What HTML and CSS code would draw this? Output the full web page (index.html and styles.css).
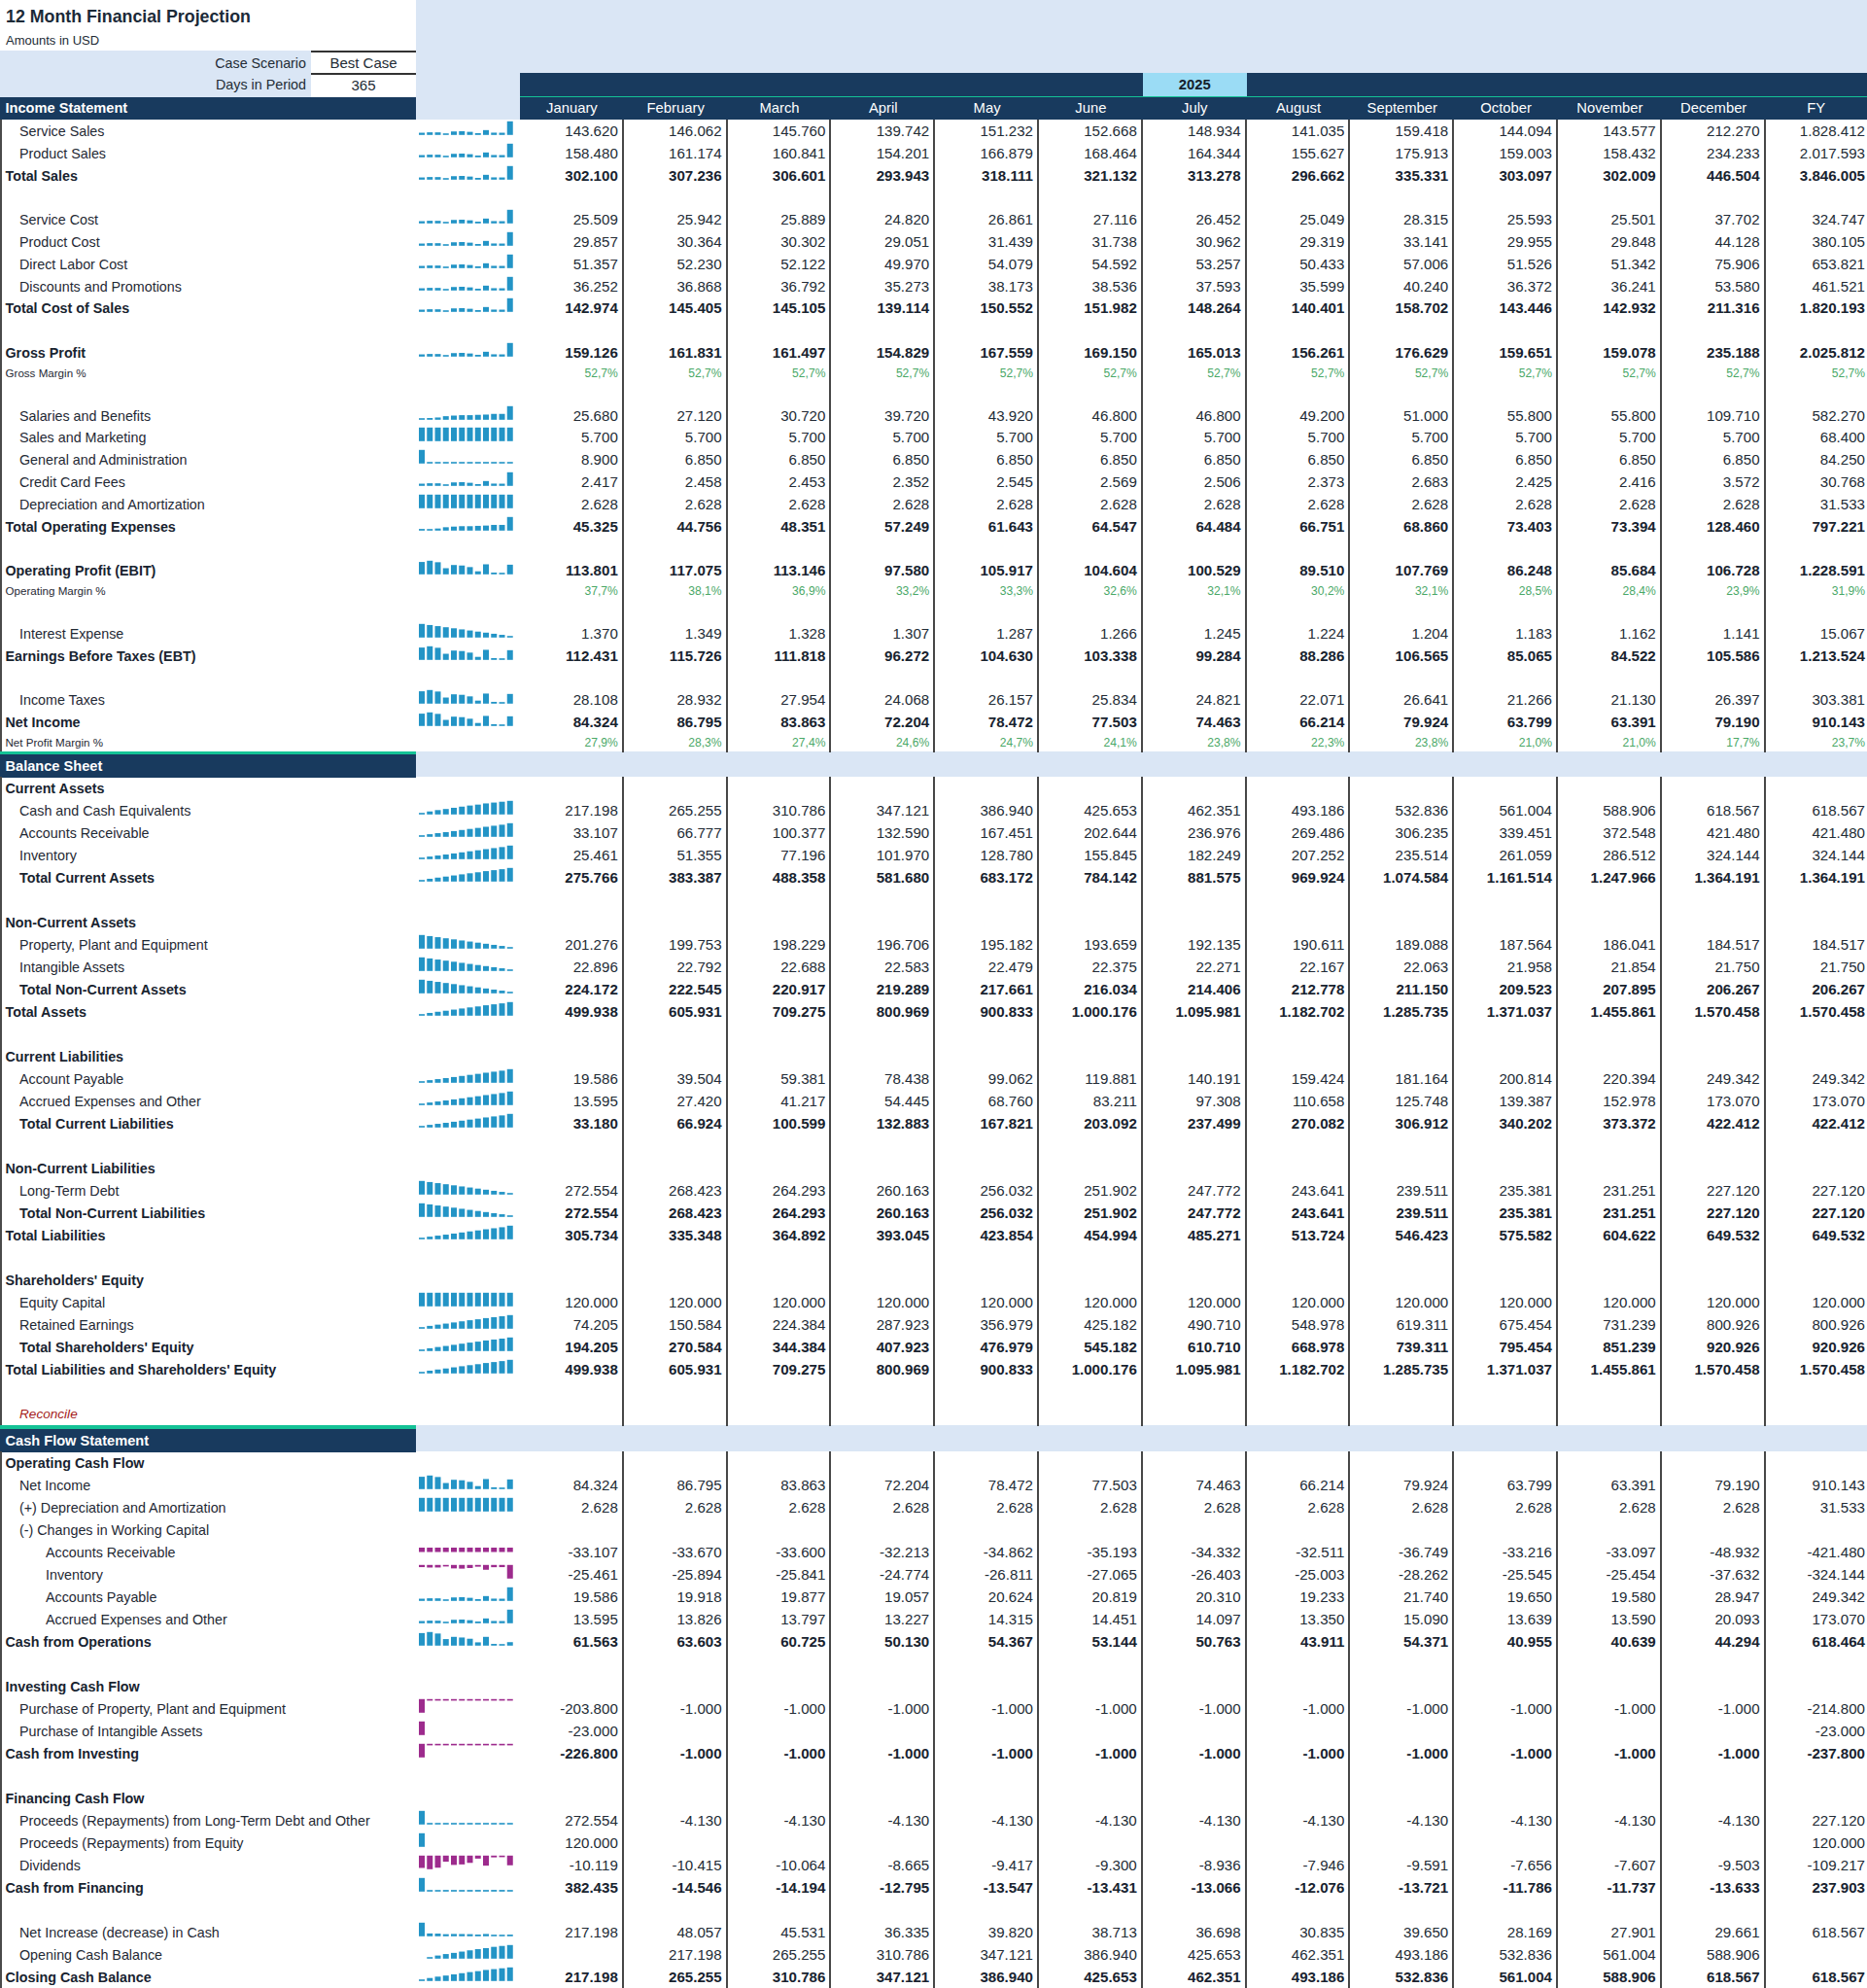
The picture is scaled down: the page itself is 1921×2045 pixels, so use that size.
FILE: index.html
```html
<!DOCTYPE html>
<html lang="en">
<head>
<meta charset="utf-8">
<title>12 Month Financial Projection</title>
<link rel="stylesheet" href="styles.css">
</head>
<body>
<div class="sheet">
  <header class="top">
    <div class="hd r1"><div class="ttl">12 Month Financial Projection</div></div>
    <div class="hd r2"><div class="sub">Amounts in USD</div></div>
    <div class="r3"><div class="pl">Case Scenario</div><div class="pv">Best Case</div></div>
    <div class="r4"><div class="pl">Days in Period</div><div class="pv">365</div><div></div><div class="nav"></div><div class="yr">2025</div><div class="nav"></div></div>
    <div class="r5"><div class="sec">Income Statement</div><div></div><span>January</span><span>February</span><span>March</span><span>April</span><span>May</span><span>June</span><span>July</span><span>August</span><span>September</span><span>October</span><span>November</span><span>December</span><span>FY</span></div>
  </header>

  <section class="part is">
  <div class="row"><div class="l i1">Service Sales</div><div class="s"></div><span>143.620</span><span>146.062</span><span>145.760</span><span>139.742</span><span>151.232</span><span>152.668</span><span>148.934</span><span>141.035</span><span>159.418</span><span>144.094</span><span>143.577</span><span>212.270</span><span>1.828.412</span></div>
  <div class="row"><div class="l i1">Product Sales</div><div class="s"></div><span>158.480</span><span>161.174</span><span>160.841</span><span>154.201</span><span>166.879</span><span>168.464</span><span>164.344</span><span>155.627</span><span>175.913</span><span>159.003</span><span>158.432</span><span>234.233</span><span>2.017.593</span></div>
  <div class="row b"><div class="l">Total Sales</div><div class="s"></div><span>302.100</span><span>307.236</span><span>306.601</span><span>293.943</span><span>318.111</span><span>321.132</span><span>313.278</span><span>296.662</span><span>335.331</span><span>303.097</span><span>302.009</span><span>446.504</span><span>3.846.005</span></div>
  <div class="row"><div class="l"></div><div></div><span></span><span></span><span></span><span></span><span></span><span></span><span></span><span></span><span></span><span></span><span></span><span></span><span></span></div>
  <div class="row"><div class="l i1">Service Cost</div><div class="s"></div><span>25.509</span><span>25.942</span><span>25.889</span><span>24.820</span><span>26.861</span><span>27.116</span><span>26.452</span><span>25.049</span><span>28.315</span><span>25.593</span><span>25.501</span><span>37.702</span><span>324.747</span></div>
  <div class="row"><div class="l i1">Product Cost</div><div class="s"></div><span>29.857</span><span>30.364</span><span>30.302</span><span>29.051</span><span>31.439</span><span>31.738</span><span>30.962</span><span>29.319</span><span>33.141</span><span>29.955</span><span>29.848</span><span>44.128</span><span>380.105</span></div>
  <div class="row"><div class="l i1">Direct Labor Cost</div><div class="s"></div><span>51.357</span><span>52.230</span><span>52.122</span><span>49.970</span><span>54.079</span><span>54.592</span><span>53.257</span><span>50.433</span><span>57.006</span><span>51.526</span><span>51.342</span><span>75.906</span><span>653.821</span></div>
  <div class="row"><div class="l i1">Discounts and Promotions</div><div class="s"></div><span>36.252</span><span>36.868</span><span>36.792</span><span>35.273</span><span>38.173</span><span>38.536</span><span>37.593</span><span>35.599</span><span>40.240</span><span>36.372</span><span>36.241</span><span>53.580</span><span>461.521</span></div>
  <div class="row b"><div class="l">Total Cost of Sales</div><div class="s"></div><span>142.974</span><span>145.405</span><span>145.105</span><span>139.114</span><span>150.552</span><span>151.982</span><span>148.264</span><span>140.401</span><span>158.702</span><span>143.446</span><span>142.932</span><span>211.316</span><span>1.820.193</span></div>
  <div class="row"><div class="l"></div><div></div><span></span><span></span><span></span><span></span><span></span><span></span><span></span><span></span><span></span><span></span><span></span><span></span><span></span></div>
  <div class="row b"><div class="l">Gross Profit</div><div class="s"></div><span>159.126</span><span>161.831</span><span>161.497</span><span>154.829</span><span>167.559</span><span>169.150</span><span>165.013</span><span>156.261</span><span>176.629</span><span>159.651</span><span>159.078</span><span>235.188</span><span>2.025.812</span></div>
  <div class="row m"><div class="l">Gross Margin %</div><div></div><span>52,7%</span><span>52,7%</span><span>52,7%</span><span>52,7%</span><span>52,7%</span><span>52,7%</span><span>52,7%</span><span>52,7%</span><span>52,7%</span><span>52,7%</span><span>52,7%</span><span>52,7%</span><span>52,7%</span></div>
  <div class="row"><div class="l"></div><div></div><span></span><span></span><span></span><span></span><span></span><span></span><span></span><span></span><span></span><span></span><span></span><span></span><span></span></div>
  <div class="row"><div class="l i1">Salaries and Benefits</div><div class="s"></div><span>25.680</span><span>27.120</span><span>30.720</span><span>39.720</span><span>43.920</span><span>46.800</span><span>46.800</span><span>49.200</span><span>51.000</span><span>55.800</span><span>55.800</span><span>109.710</span><span>582.270</span></div>
  <div class="row"><div class="l i1">Sales and Marketing</div><div class="s"></div><span>5.700</span><span>5.700</span><span>5.700</span><span>5.700</span><span>5.700</span><span>5.700</span><span>5.700</span><span>5.700</span><span>5.700</span><span>5.700</span><span>5.700</span><span>5.700</span><span>68.400</span></div>
  <div class="row"><div class="l i1">General and Administration</div><div class="s"></div><span>8.900</span><span>6.850</span><span>6.850</span><span>6.850</span><span>6.850</span><span>6.850</span><span>6.850</span><span>6.850</span><span>6.850</span><span>6.850</span><span>6.850</span><span>6.850</span><span>84.250</span></div>
  <div class="row"><div class="l i1">Credit Card Fees</div><div class="s"></div><span>2.417</span><span>2.458</span><span>2.453</span><span>2.352</span><span>2.545</span><span>2.569</span><span>2.506</span><span>2.373</span><span>2.683</span><span>2.425</span><span>2.416</span><span>3.572</span><span>30.768</span></div>
  <div class="row"><div class="l i1">Depreciation and Amortization</div><div class="s"></div><span>2.628</span><span>2.628</span><span>2.628</span><span>2.628</span><span>2.628</span><span>2.628</span><span>2.628</span><span>2.628</span><span>2.628</span><span>2.628</span><span>2.628</span><span>2.628</span><span>31.533</span></div>
  <div class="row b"><div class="l">Total Operating Expenses</div><div class="s"></div><span>45.325</span><span>44.756</span><span>48.351</span><span>57.249</span><span>61.643</span><span>64.547</span><span>64.484</span><span>66.751</span><span>68.860</span><span>73.403</span><span>73.394</span><span>128.460</span><span>797.221</span></div>
  <div class="row"><div class="l"></div><div></div><span></span><span></span><span></span><span></span><span></span><span></span><span></span><span></span><span></span><span></span><span></span><span></span><span></span></div>
  <div class="row b"><div class="l">Operating Profit (EBIT)</div><div class="s"></div><span>113.801</span><span>117.075</span><span>113.146</span><span>97.580</span><span>105.917</span><span>104.604</span><span>100.529</span><span>89.510</span><span>107.769</span><span>86.248</span><span>85.684</span><span>106.728</span><span>1.228.591</span></div>
  <div class="row m"><div class="l">Operating Margin %</div><div></div><span>37,7%</span><span>38,1%</span><span>36,9%</span><span>33,2%</span><span>33,3%</span><span>32,6%</span><span>32,1%</span><span>30,2%</span><span>32,1%</span><span>28,5%</span><span>28,4%</span><span>23,9%</span><span>31,9%</span></div>
  <div class="row"><div class="l"></div><div></div><span></span><span></span><span></span><span></span><span></span><span></span><span></span><span></span><span></span><span></span><span></span><span></span><span></span></div>
  <div class="row"><div class="l i1">Interest Expense</div><div class="s"></div><span>1.370</span><span>1.349</span><span>1.328</span><span>1.307</span><span>1.287</span><span>1.266</span><span>1.245</span><span>1.224</span><span>1.204</span><span>1.183</span><span>1.162</span><span>1.141</span><span>15.067</span></div>
  <div class="row b"><div class="l">Earnings Before Taxes (EBT)</div><div class="s"></div><span>112.431</span><span>115.726</span><span>111.818</span><span>96.272</span><span>104.630</span><span>103.338</span><span>99.284</span><span>88.286</span><span>106.565</span><span>85.065</span><span>84.522</span><span>105.586</span><span>1.213.524</span></div>
  <div class="row"><div class="l"></div><div></div><span></span><span></span><span></span><span></span><span></span><span></span><span></span><span></span><span></span><span></span><span></span><span></span><span></span></div>
  <div class="row"><div class="l i1">Income Taxes</div><div class="s"></div><span>28.108</span><span>28.932</span><span>27.954</span><span>24.068</span><span>26.157</span><span>25.834</span><span>24.821</span><span>22.071</span><span>26.641</span><span>21.266</span><span>21.130</span><span>26.397</span><span>303.381</span></div>
  <div class="row b"><div class="l">Net Income</div><div class="s"></div><span>84.324</span><span>86.795</span><span>83.863</span><span>72.204</span><span>78.472</span><span>77.503</span><span>74.463</span><span>66.214</span><span>79.924</span><span>63.799</span><span>63.391</span><span>79.190</span><span>910.143</span></div>
  <div class="row m"><div class="l">Net Profit Margin %</div><div></div><span>27,9%</span><span>28,3%</span><span>27,4%</span><span>24,6%</span><span>24,7%</span><span>24,1%</span><span>23,8%</span><span>22,3%</span><span>23,8%</span><span>21,0%</span><span>21,0%</span><span>17,7%</span><span>23,7%</span></div>
  </section>

  <section class="part">
  <div class="sep"><div></div></div>
  <div class="sh"><div class="sec">Balance Sheet</div></div>
  <div class="row b"><div class="l">Current Assets</div><div></div><span></span><span></span><span></span><span></span><span></span><span></span><span></span><span></span><span></span><span></span><span></span><span></span><span></span></div>
  <div class="row"><div class="l i1">Cash and Cash Equivalents</div><div class="s"></div><span>217.198</span><span>265.255</span><span>310.786</span><span>347.121</span><span>386.940</span><span>425.653</span><span>462.351</span><span>493.186</span><span>532.836</span><span>561.004</span><span>588.906</span><span>618.567</span><span>618.567</span></div>
  <div class="row"><div class="l i1">Accounts Receivable</div><div class="s"></div><span>33.107</span><span>66.777</span><span>100.377</span><span>132.590</span><span>167.451</span><span>202.644</span><span>236.976</span><span>269.486</span><span>306.235</span><span>339.451</span><span>372.548</span><span>421.480</span><span>421.480</span></div>
  <div class="row"><div class="l i1">Inventory</div><div class="s"></div><span>25.461</span><span>51.355</span><span>77.196</span><span>101.970</span><span>128.780</span><span>155.845</span><span>182.249</span><span>207.252</span><span>235.514</span><span>261.059</span><span>286.512</span><span>324.144</span><span>324.144</span></div>
  <div class="row b"><div class="l i1">Total Current Assets</div><div class="s"></div><span>275.766</span><span>383.387</span><span>488.358</span><span>581.680</span><span>683.172</span><span>784.142</span><span>881.575</span><span>969.924</span><span>1.074.584</span><span>1.161.514</span><span>1.247.966</span><span>1.364.191</span><span>1.364.191</span></div>
  <div class="row"><div class="l"></div><div></div><span></span><span></span><span></span><span></span><span></span><span></span><span></span><span></span><span></span><span></span><span></span><span></span><span></span></div>
  <div class="row b"><div class="l">Non-Current Assets</div><div></div><span></span><span></span><span></span><span></span><span></span><span></span><span></span><span></span><span></span><span></span><span></span><span></span><span></span></div>
  <div class="row"><div class="l i1">Property, Plant and Equipment</div><div class="s"></div><span>201.276</span><span>199.753</span><span>198.229</span><span>196.706</span><span>195.182</span><span>193.659</span><span>192.135</span><span>190.611</span><span>189.088</span><span>187.564</span><span>186.041</span><span>184.517</span><span>184.517</span></div>
  <div class="row"><div class="l i1">Intangible Assets</div><div class="s"></div><span>22.896</span><span>22.792</span><span>22.688</span><span>22.583</span><span>22.479</span><span>22.375</span><span>22.271</span><span>22.167</span><span>22.063</span><span>21.958</span><span>21.854</span><span>21.750</span><span>21.750</span></div>
  <div class="row b"><div class="l i1">Total Non-Current Assets</div><div class="s"></div><span>224.172</span><span>222.545</span><span>220.917</span><span>219.289</span><span>217.661</span><span>216.034</span><span>214.406</span><span>212.778</span><span>211.150</span><span>209.523</span><span>207.895</span><span>206.267</span><span>206.267</span></div>
  <div class="row b"><div class="l">Total Assets</div><div class="s"></div><span>499.938</span><span>605.931</span><span>709.275</span><span>800.969</span><span>900.833</span><span>1.000.176</span><span>1.095.981</span><span>1.182.702</span><span>1.285.735</span><span>1.371.037</span><span>1.455.861</span><span>1.570.458</span><span>1.570.458</span></div>
  <div class="row"><div class="l"></div><div></div><span></span><span></span><span></span><span></span><span></span><span></span><span></span><span></span><span></span><span></span><span></span><span></span><span></span></div>
  <div class="row b"><div class="l">Current Liabilities</div><div></div><span></span><span></span><span></span><span></span><span></span><span></span><span></span><span></span><span></span><span></span><span></span><span></span><span></span></div>
  <div class="row"><div class="l i1">Account Payable</div><div class="s"></div><span>19.586</span><span>39.504</span><span>59.381</span><span>78.438</span><span>99.062</span><span>119.881</span><span>140.191</span><span>159.424</span><span>181.164</span><span>200.814</span><span>220.394</span><span>249.342</span><span>249.342</span></div>
  <div class="row"><div class="l i1">Accrued Expenses and Other</div><div class="s"></div><span>13.595</span><span>27.420</span><span>41.217</span><span>54.445</span><span>68.760</span><span>83.211</span><span>97.308</span><span>110.658</span><span>125.748</span><span>139.387</span><span>152.978</span><span>173.070</span><span>173.070</span></div>
  <div class="row b"><div class="l i1">Total Current Liabilities</div><div class="s"></div><span>33.180</span><span>66.924</span><span>100.599</span><span>132.883</span><span>167.821</span><span>203.092</span><span>237.499</span><span>270.082</span><span>306.912</span><span>340.202</span><span>373.372</span><span>422.412</span><span>422.412</span></div>
  <div class="row"><div class="l"></div><div></div><span></span><span></span><span></span><span></span><span></span><span></span><span></span><span></span><span></span><span></span><span></span><span></span><span></span></div>
  <div class="row b"><div class="l">Non-Current Liabilities</div><div></div><span></span><span></span><span></span><span></span><span></span><span></span><span></span><span></span><span></span><span></span><span></span><span></span><span></span></div>
  <div class="row"><div class="l i1">Long-Term Debt</div><div class="s"></div><span>272.554</span><span>268.423</span><span>264.293</span><span>260.163</span><span>256.032</span><span>251.902</span><span>247.772</span><span>243.641</span><span>239.511</span><span>235.381</span><span>231.251</span><span>227.120</span><span>227.120</span></div>
  <div class="row b"><div class="l i1">Total Non-Current Liabilities</div><div class="s"></div><span>272.554</span><span>268.423</span><span>264.293</span><span>260.163</span><span>256.032</span><span>251.902</span><span>247.772</span><span>243.641</span><span>239.511</span><span>235.381</span><span>231.251</span><span>227.120</span><span>227.120</span></div>
  <div class="row b"><div class="l">Total Liabilities</div><div class="s"></div><span>305.734</span><span>335.348</span><span>364.892</span><span>393.045</span><span>423.854</span><span>454.994</span><span>485.271</span><span>513.724</span><span>546.423</span><span>575.582</span><span>604.622</span><span>649.532</span><span>649.532</span></div>
  <div class="row"><div class="l"></div><div></div><span></span><span></span><span></span><span></span><span></span><span></span><span></span><span></span><span></span><span></span><span></span><span></span><span></span></div>
  <div class="row b"><div class="l">Shareholders' Equity</div><div></div><span></span><span></span><span></span><span></span><span></span><span></span><span></span><span></span><span></span><span></span><span></span><span></span><span></span></div>
  <div class="row"><div class="l i1">Equity Capital</div><div class="s"></div><span>120.000</span><span>120.000</span><span>120.000</span><span>120.000</span><span>120.000</span><span>120.000</span><span>120.000</span><span>120.000</span><span>120.000</span><span>120.000</span><span>120.000</span><span>120.000</span><span>120.000</span></div>
  <div class="row"><div class="l i1">Retained Earnings</div><div class="s"></div><span>74.205</span><span>150.584</span><span>224.384</span><span>287.923</span><span>356.979</span><span>425.182</span><span>490.710</span><span>548.978</span><span>619.311</span><span>675.454</span><span>731.239</span><span>800.926</span><span>800.926</span></div>
  <div class="row b"><div class="l i1">Total Shareholders' Equity</div><div class="s"></div><span>194.205</span><span>270.584</span><span>344.384</span><span>407.923</span><span>476.979</span><span>545.182</span><span>610.710</span><span>668.978</span><span>739.311</span><span>795.454</span><span>851.239</span><span>920.926</span><span>920.926</span></div>
  <div class="row b"><div class="l">Total Liabilities and Shareholders' Equity</div><div class="s"></div><span>499.938</span><span>605.931</span><span>709.275</span><span>800.969</span><span>900.833</span><span>1.000.176</span><span>1.095.981</span><span>1.182.702</span><span>1.285.735</span><span>1.371.037</span><span>1.455.861</span><span>1.570.458</span><span>1.570.458</span></div>
  <div class="row"><div class="l"></div><div></div><span></span><span></span><span></span><span></span><span></span><span></span><span></span><span></span><span></span><span></span><span></span><span></span><span></span></div>
  <div class="row"><div class="l i1 rec">Reconcile</div><div></div><span></span><span></span><span></span><span></span><span></span><span></span><span></span><span></span><span></span><span></span><span></span><span></span><span></span></div>
  </section>

  <section class="part">
  <div class="sep"><div></div></div>
  <div class="sh"><div class="sec">Cash Flow Statement</div></div>
  <div class="row b"><div class="l">Operating Cash Flow</div><div></div><span></span><span></span><span></span><span></span><span></span><span></span><span></span><span></span><span></span><span></span><span></span><span></span><span></span></div>
  <div class="row"><div class="l i1">Net Income</div><div class="s"></div><span>84.324</span><span>86.795</span><span>83.863</span><span>72.204</span><span>78.472</span><span>77.503</span><span>74.463</span><span>66.214</span><span>79.924</span><span>63.799</span><span>63.391</span><span>79.190</span><span>910.143</span></div>
  <div class="row"><div class="l i1">(+) Depreciation and Amortization</div><div class="s"></div><span>2.628</span><span>2.628</span><span>2.628</span><span>2.628</span><span>2.628</span><span>2.628</span><span>2.628</span><span>2.628</span><span>2.628</span><span>2.628</span><span>2.628</span><span>2.628</span><span>31.533</span></div>
  <div class="row"><div class="l i1">(-) Changes in Working Capital</div><div></div><span></span><span></span><span></span><span></span><span></span><span></span><span></span><span></span><span></span><span></span><span></span><span></span><span></span></div>
  <div class="row"><div class="l i2">Accounts Receivable</div><div class="s flat"></div><span>-33.107</span><span>-33.670</span><span>-33.600</span><span>-32.213</span><span>-34.862</span><span>-35.193</span><span>-34.332</span><span>-32.511</span><span>-36.749</span><span>-33.216</span><span>-33.097</span><span>-48.932</span><span>-421.480</span></div>
  <div class="row"><div class="l i2">Inventory</div><div class="s"></div><span>-25.461</span><span>-25.894</span><span>-25.841</span><span>-24.774</span><span>-26.811</span><span>-27.065</span><span>-26.403</span><span>-25.003</span><span>-28.262</span><span>-25.545</span><span>-25.454</span><span>-37.632</span><span>-324.144</span></div>
  <div class="row"><div class="l i2">Accounts Payable</div><div class="s"></div><span>19.586</span><span>19.918</span><span>19.877</span><span>19.057</span><span>20.624</span><span>20.819</span><span>20.310</span><span>19.233</span><span>21.740</span><span>19.650</span><span>19.580</span><span>28.947</span><span>249.342</span></div>
  <div class="row"><div class="l i2">Accrued Expenses and Other</div><div class="s"></div><span>13.595</span><span>13.826</span><span>13.797</span><span>13.227</span><span>14.315</span><span>14.451</span><span>14.097</span><span>13.350</span><span>15.090</span><span>13.639</span><span>13.590</span><span>20.093</span><span>173.070</span></div>
  <div class="row b"><div class="l">Cash from Operations</div><div class="s"></div><span>61.563</span><span>63.603</span><span>60.725</span><span>50.130</span><span>54.367</span><span>53.144</span><span>50.763</span><span>43.911</span><span>54.371</span><span>40.955</span><span>40.639</span><span>44.294</span><span>618.464</span></div>
  <div class="row"><div class="l"></div><div></div><span></span><span></span><span></span><span></span><span></span><span></span><span></span><span></span><span></span><span></span><span></span><span></span><span></span></div>
  <div class="row b"><div class="l">Investing Cash Flow</div><div></div><span></span><span></span><span></span><span></span><span></span><span></span><span></span><span></span><span></span><span></span><span></span><span></span><span></span></div>
  <div class="row"><div class="l i1">Purchase of Property, Plant and Equipment</div><div class="s"></div><span>-203.800</span><span>-1.000</span><span>-1.000</span><span>-1.000</span><span>-1.000</span><span>-1.000</span><span>-1.000</span><span>-1.000</span><span>-1.000</span><span>-1.000</span><span>-1.000</span><span>-1.000</span><span>-214.800</span></div>
  <div class="row"><div class="l i1">Purchase of Intangible Assets</div><div class="s"></div><span>-23.000</span><span></span><span></span><span></span><span></span><span></span><span></span><span></span><span></span><span></span><span></span><span></span><span>-23.000</span></div>
  <div class="row b"><div class="l">Cash from Investing</div><div class="s"></div><span>-226.800</span><span>-1.000</span><span>-1.000</span><span>-1.000</span><span>-1.000</span><span>-1.000</span><span>-1.000</span><span>-1.000</span><span>-1.000</span><span>-1.000</span><span>-1.000</span><span>-1.000</span><span>-237.800</span></div>
  <div class="row"><div class="l"></div><div></div><span></span><span></span><span></span><span></span><span></span><span></span><span></span><span></span><span></span><span></span><span></span><span></span><span></span></div>
  <div class="row b"><div class="l">Financing Cash Flow</div><div></div><span></span><span></span><span></span><span></span><span></span><span></span><span></span><span></span><span></span><span></span><span></span><span></span><span></span></div>
  <div class="row"><div class="l i1">Proceeds (Repayments) from Long-Term Debt and Other</div><div class="s"></div><span>272.554</span><span>-4.130</span><span>-4.130</span><span>-4.130</span><span>-4.130</span><span>-4.130</span><span>-4.130</span><span>-4.130</span><span>-4.130</span><span>-4.130</span><span>-4.130</span><span>-4.130</span><span>227.120</span></div>
  <div class="row"><div class="l i1">Proceeds (Repayments) from Equity</div><div class="s"></div><span>120.000</span><span></span><span></span><span></span><span></span><span></span><span></span><span></span><span></span><span></span><span></span><span></span><span>120.000</span></div>
  <div class="row"><div class="l i1">Dividends</div><div class="s"></div><span>-10.119</span><span>-10.415</span><span>-10.064</span><span>-8.665</span><span>-9.417</span><span>-9.300</span><span>-8.936</span><span>-7.946</span><span>-9.591</span><span>-7.656</span><span>-7.607</span><span>-9.503</span><span>-109.217</span></div>
  <div class="row b"><div class="l">Cash from Financing</div><div class="s"></div><span>382.435</span><span>-14.546</span><span>-14.194</span><span>-12.795</span><span>-13.547</span><span>-13.431</span><span>-13.066</span><span>-12.076</span><span>-13.721</span><span>-11.786</span><span>-11.737</span><span>-13.633</span><span>237.903</span></div>
  <div class="row"><div class="l"></div><div></div><span></span><span></span><span></span><span></span><span></span><span></span><span></span><span></span><span></span><span></span><span></span><span></span><span></span></div>
  <div class="row"><div class="l i1">Net Increase (decrease) in Cash</div><div class="s"></div><span>217.198</span><span>48.057</span><span>45.531</span><span>36.335</span><span>39.820</span><span>38.713</span><span>36.698</span><span>30.835</span><span>39.650</span><span>28.169</span><span>27.901</span><span>29.661</span><span>618.567</span></div>
  <div class="row"><div class="l i1">Opening Cash Balance</div><div class="s"></div><span></span><span>217.198</span><span>265.255</span><span>310.786</span><span>347.121</span><span>386.940</span><span>425.653</span><span>462.351</span><span>493.186</span><span>532.836</span><span>561.004</span><span>588.906</span><span></span></div>
  <div class="row b"><div class="l">Closing Cash Balance</div><div class="s"></div><span>217.198</span><span>265.255</span><span>310.786</span><span>347.121</span><span>386.940</span><span>425.653</span><span>462.351</span><span>493.186</span><span>532.836</span><span>561.004</span><span>588.906</span><span>618.567</span><span>618.567</span></div>
  </section>
</div>
<script src="script.js"></script>
</body>
</html>
```

FILE: styles.css
```css
* { box-sizing: border-box; margin: 0; padding: 0; }
html, body { background: #dae6f5; overflow: hidden; }
body {
  width: 1921px;
  font-family: "Liberation Sans", Arial, sans-serif;
  font-size: 15.1px;
  color: #232c36;
}
.sheet { display: flex; flex-direction: column; }

/* ---------- title block ---------- */
.hd { display: grid; grid-template-columns: 428px 1fr; }
.hd > div { background: #fff; }
.r1 { height: 30px; }
.ttl {
  font-weight: 700;
  font-size: 17.8px;
  color: #1c2a38;
  padding: 5px 0 0 6px;
  line-height: 24px;
}
.r2 { height: 22px; }
.sub {
  font-size: 13px;
  color: #222b35;
  padding: 3px 0 0 6px;
  line-height: 18px;
}
.r3, .r4 {
  display: grid;
  grid-template-columns: 320px 108px 107px 640.8px 106.8px 1fr;
  font-size: 14.3px;
}
.r3 { height: 23px; }
.r4 { height: 25px; }
.r3 .pl { line-height: 26px; }
.r4 .pl { line-height: 25px; }
.pl { text-align: right; padding-right: 5px; }
.pv {
  background: #fff;
  text-align: center;
  border-top: 2px solid #333;
  line-height: 21px;
  font-size: 15px;
}
.nav { background: #183a5e; border-bottom: 3px solid #14c296; }
.yr {
  background: #9bdcf5;
  border-bottom: 3px solid #14c296;
  text-align: center;
  font-weight: 700;
  font-size: 14.8px;
  color: #14202c;
  line-height: 24px;
}
.r5 {
  display: grid;
  grid-template-columns: 428px 107px repeat(12, 106.8px) 1fr;
  height: 23px;
  line-height: 23px;
  font-size: 14.8px;
}
.r5 > span { background: #183a5e; color: #fff; text-align: center; }
.sec {
  background: #183a5e;
  color: #fff;
  font-weight: 700;
  font-size: 14.6px;
  padding-left: 5.5px;
}

/* ---------- body rows ---------- */
.row {
  display: grid;
  grid-template-columns: 428px 107px repeat(12, 106.8px) 1fr;
  height: 23px;
  line-height: 24px;
  background: #fff;
  white-space: nowrap;
}
.is .row { height: 22.8px; }
.row > span {
  text-align: right;
  padding-right: 4px;
  border-right: 2px solid #474747;
  overflow: hidden;
}
.row > span:last-child { border-right: 0; padding-right: 2px; }
.l {
  border-left: 2px solid #4a4a4a;
  padding-left: 3.5px;
  font-size: 14.3px;
  color: #1f2934;
}
.l.i1 { padding-left: 18px; }
.l.i2 { padding-left: 45px; }
.row.b { font-weight: 700; color: #18232f; }
.row.b .l { color: #18232f; }
.is .row.m { height: 19px; line-height: 20px; }
.row.m .l { font-size: 11.6px; }
.row.m > span { color: #4aa867; font-size: 12.1px; }
.l.rec { color: #a41c1c; font-style: italic; font-size: 13.6px; }

.s svg { display: block; }
.s .pos { fill: #2394c6; }
.s .neg { fill: #9d2b8d; }

/* ---------- section headers ---------- */
.sep { display: grid; grid-template-columns: 428px 1fr; height: 3.5px; }
.sep > div { background: #14c296; }
.sh {
  display: grid;
  grid-template-columns: 428px 1fr;
  height: 23px;
  line-height: 24px;
}
```

FILE: script.js
```js
(function () {
  var NS = 'http://www.w3.org/2000/svg';
  var TOP = 1.8, H = 14, STUB = 1.6;
  var cells = document.querySelectorAll('.s');
  for (var k = 0; k < cells.length; k++) {
    var cell = cells[k];
    var spans = cell.parentNode.querySelectorAll('span');
    var vals = [];
    for (var i = 0; i < 12; i++) {
      var t = spans[i].textContent.trim();
      vals.push(t ? parseFloat(t.replace(/\./g, '')) : null);
    }
    var nums = vals.filter(function (v) { return v !== null; });
    var max = Math.max.apply(null, nums), min = Math.min.apply(null, nums);
    var neg = max <= 0;
    var flat = cell.classList.contains('flat');
    var svg = document.createElementNS(NS, 'svg');
    svg.setAttribute('width', '107');
    svg.setAttribute('height', '23');
    svg.setAttribute('viewBox', '0 0 107 23');
    vals.forEach(function (v, i) {
      if (v === null) return;
      var f = max === min ? 1 : (neg ? (max - v) : (v - min)) / (max - min);
      var h = flat ? 4.5 : STUB + f * (H - STUB);
      var y = flat ? 7 : (neg ? TOP : TOP + H - h);
      var r = document.createElementNS(NS, 'rect');
      r.setAttribute('x', (3 + i * 8.25).toFixed(2));
      r.setAttribute('y', y.toFixed(2));
      r.setAttribute('width', '6');
      r.setAttribute('height', h.toFixed(2));
      r.setAttribute('class', (neg || flat) ? 'neg' : 'pos');
      svg.appendChild(r);
    });
    cell.appendChild(svg);
  }
})();
```
